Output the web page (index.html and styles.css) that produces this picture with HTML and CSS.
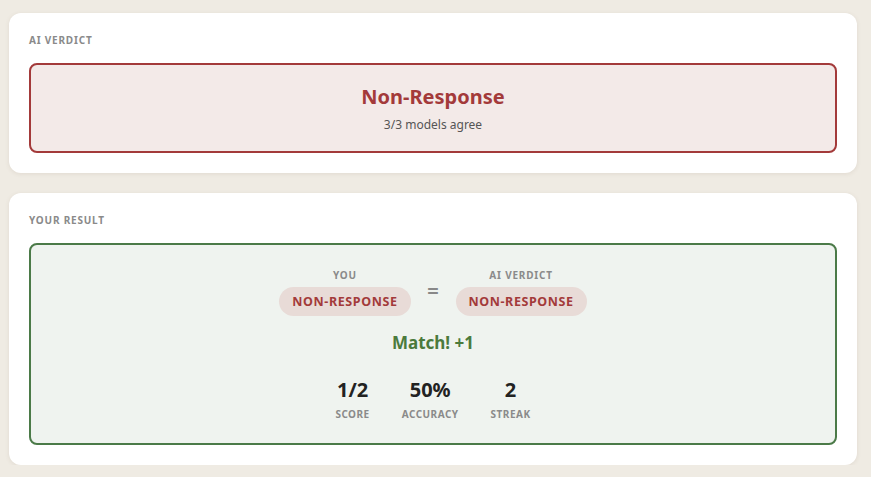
FILE: index.html
```html
<!DOCTYPE html>
<html>
<head>
<meta charset="utf-8">
<link rel="stylesheet" href="styles.css">
</head>
<body>
<div class="page">
  <section class="card">
    <div class="label">AI Verdict</div>
    <div class="verdict-box">
      <div class="verdict-title">Non-Response</div>
      <div class="verdict-sub">3/3 models agree</div>
    </div>
  </section>
  <section class="card">
    <div class="label">Your Result</div>
    <div class="result-box">
      <div class="compare">
        <div class="side">
          <div class="side-label">You</div>
          <div class="pill">Non-Response</div>
        </div>
        <div class="equals">=</div>
        <div class="side">
          <div class="side-label">AI Verdict</div>
          <div class="pill">Non-Response</div>
        </div>
      </div>
      <div class="match">Match! +1</div>
      <div class="stats">
        <div class="stat"><div class="stat-value">1/2</div><div class="stat-label">Score</div></div>
        <div class="stat"><div class="stat-value">50%</div><div class="stat-label">Accuracy</div></div>
        <div class="stat"><div class="stat-value">2</div><div class="stat-label">Streak</div></div>
      </div>
    </div>
  </section>
</div>
</body>
</html>
```
FILE: styles.css
```css
* { box-sizing: border-box; }
html, body { margin: 0; padding: 0; }
body {
  background: #efebe3;
  font-family: "Noto Sans", "Open Sans", sans-serif;
  color: #222;
}
.page {
  padding: 13px 14px 0 9px;
  display: flex;
  flex-direction: column;
  gap: 20px;
}
.card {
  background: #fff;
  border-radius: 12px;
  padding: 20px;
  box-shadow: 0 1px 4px rgba(120, 100, 70, 0.12);
}
.label {
  font-size: 10px;
  line-height: 14px;
  font-weight: 700;
  letter-spacing: 0.8px;
  text-transform: uppercase;
  color: #8a8a8a;
  margin-bottom: 16px;
}
.verdict-box {
  border: 2px solid #a33a3a;
  background: #f3eae8;
  border-radius: 8px;
  padding: 19px 16px 18px;
  text-align: center;
}
.verdict-title {
  font-size: 20px;
  line-height: 26px;
  font-weight: 700;
  color: #a33a3a;
}
.verdict-sub {
  margin-top: 7px;
  font-size: 12px;
  line-height: 16px;
  color: #555;
}
.result-box {
  border: 2px solid #4b7a48;
  background: #eff3ef;
  border-radius: 8px;
  padding: 23px 16px 22px;
  display: flex;
  flex-direction: column;
  align-items: center;
}
.compare {
  display: flex;
  align-items: center;
  gap: 16px;
}
.side {
  display: flex;
  flex-direction: column;
  align-items: center;
  gap: 5px;
}
.side-label {
  font-size: 10px;
  line-height: 14px;
  font-weight: 700;
  letter-spacing: 0.8px;
  text-transform: uppercase;
  color: #8a8a8a;
}
.pill {
  height: 29px;
  line-height: 29px;
  padding: 0 13px;
  border-radius: 14.5px;
  background: #e8dbd7;
  color: #a33a3a;
  font-size: 12.5px;
  font-weight: 700;
  letter-spacing: 0.6px;
  text-transform: uppercase;
}
.equals {
  font-size: 20px;
  font-weight: 700;
  color: #888;
  width: 13px;
  text-align: center;
  margin-top: -4px;
}
.match {
  margin-top: 16px;
  font-size: 17px;
  line-height: 22px;
  font-weight: 700;
  color: #4b7a3c;
}
.stats {
  margin-top: 23px;
  display: flex;
  gap: 32px;
}
.stat {
  display: flex;
  flex-direction: column;
  align-items: center;
}
.stat-value {
  font-size: 20px;
  line-height: 26px;
  font-weight: 700;
  color: #222;
}
.stat-label {
  margin-top: 4px;
  font-size: 10px;
  line-height: 14px;
  font-weight: 700;
  letter-spacing: 0.5px;
  text-transform: uppercase;
  color: #8a8a8a;
}
```
